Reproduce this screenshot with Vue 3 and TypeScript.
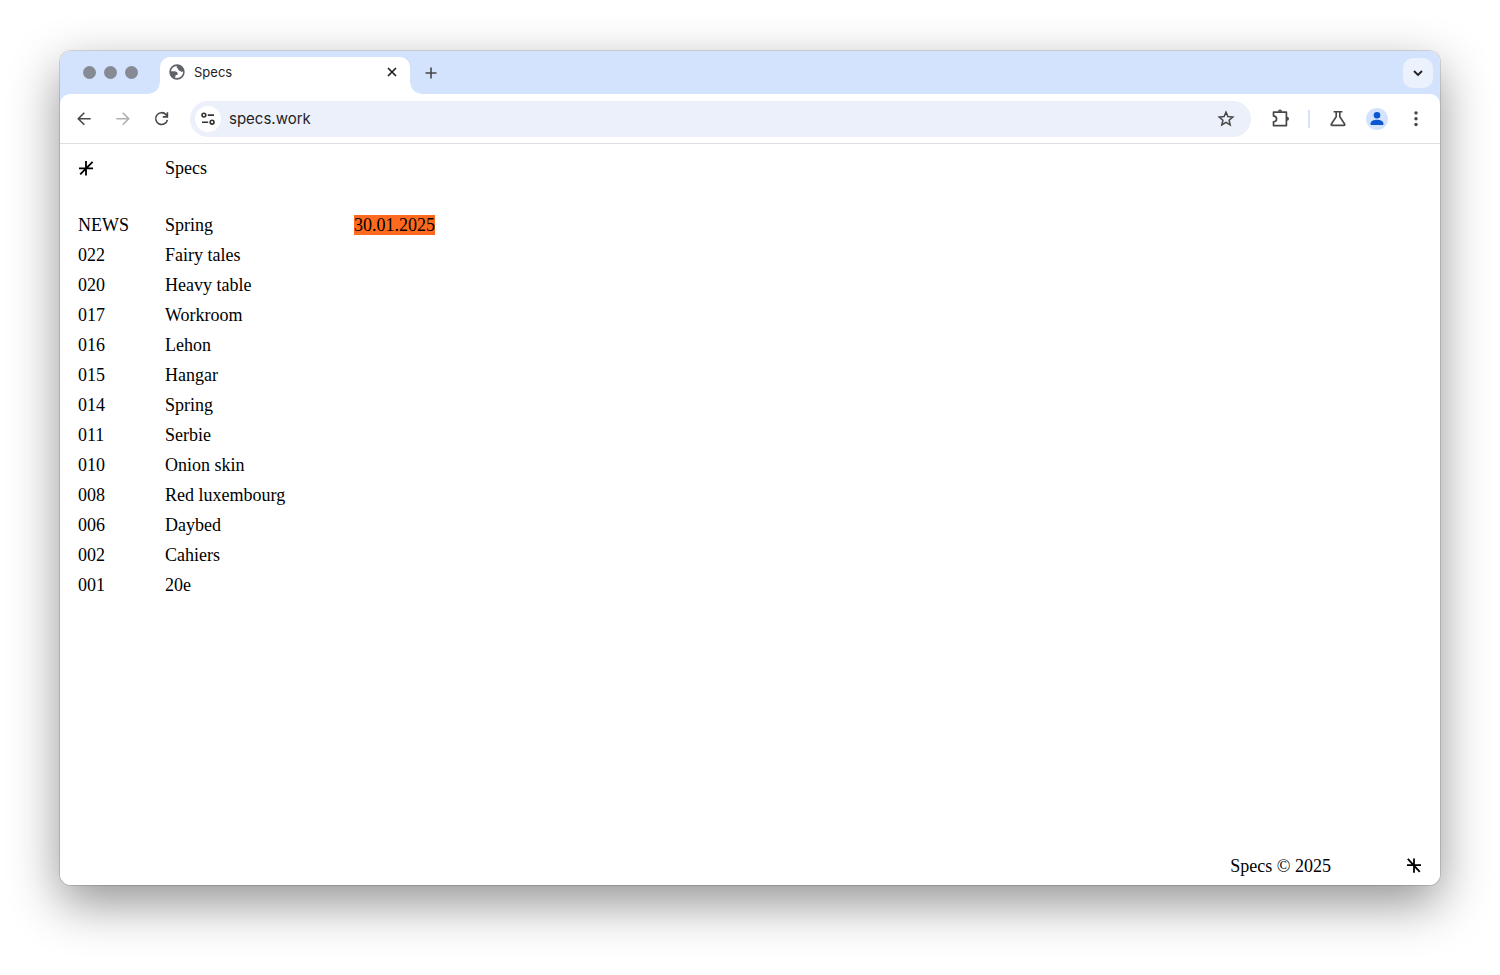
<script setup lang="ts">
import { ref } from 'vue'

interface Entry {
  code: string
  title: string
  date?: string
}

const address = ref('specs.work')

const entries: Entry[] = [
  { code: 'NEWS', title: 'Spring', date: '30.01.2025' },
  { code: '022', title: 'Fairy tales' },
  { code: '020', title: 'Heavy table' },
  { code: '017', title: 'Workroom' },
  { code: '016', title: 'Lehon' },
  { code: '015', title: 'Hangar' },
  { code: '014', title: 'Spring' },
  { code: '011', title: 'Serbie' },
  { code: '010', title: 'Onion skin' },
  { code: '008', title: 'Red luxembourg' },
  { code: '006', title: 'Daybed' },
  { code: '002', title: 'Cahiers' },
  { code: '001', title: '20e' },
]
</script>

<template>
  <div class="desktop">
    <div class="window">
      <div class="tabstrip">
        <div class="lights"><i></i><i></i><i></i></div>
        <div class="tab">
          <svg class="globe" viewBox="0 0 16 16" width="16" height="16" aria-hidden="true">
            <circle cx="8" cy="8" r="6.9" fill="#fff" stroke="#5f6368" stroke-width="1.6" />
            <path fill="#5f6368" d="M8.8 1C7.6 2 7.3 3.2 8 4C8.6 4.6 9.2 4.4 9.2 5.2C9.2 6.2 10 6.8 10.9 6.7C11.6 6.6 11.6 7.9 12.6 7.9C13.6 7.9 14 7.2 15 7.4C14.8 4 12.4 1.4 8.8 1ZM1.1 7.3H5.2C7.4 7.3 8.8 8.3 8.7 9.9C8.6 10.7 7.9 11 7 10.9C6.5 10.9 6.6 11.6 6.5 12.3C6.3 13 5.6 12.9 5.5 14.4C2.6 13.4 .9 10.7 1.1 7.3Z" />
          </svg>
          <span class="tab-title">Specs</span>
          <button class="icon close" aria-label="Close tab">
            <svg viewBox="0 0 16 16" width="16" height="16"><path d="M4 4l8 8M12 4l-8 8" stroke="#1f1f1f" stroke-width="1.7" fill="none" /></svg>
          </button>
        </div>
        <button class="icon new-tab" aria-label="New tab">
          <svg viewBox="0 0 16 16" width="16" height="16"><path d="M8 2.5v11M2.5 8h11" stroke="#474747" stroke-width="1.6" fill="none" /></svg>
        </button>
        <button class="icon tab-search" aria-label="Search tabs">
          <svg viewBox="0 0 16 16" width="16" height="16"><path d="M4 6l4 4 4-4" stroke="#1f1f1f" stroke-width="1.8" fill="none" /></svg>
        </button>
      </div>

      <div class="toolbar">
        <div class="nav">
          <button class="icon" aria-label="Back">
            <svg viewBox="0 0 20 20" width="20" height="20"><path d="M16.7 9.7H5M10.3 3.7L4.3 9.7l6 6" stroke="#474747" stroke-width="1.6" fill="none" /></svg>
          </button>
          <button class="icon" aria-label="Forward" disabled>
            <svg viewBox="0 0 20 20" width="20" height="20"><path d="M3.3 9.7H15M9.7 3.7l6 6-6 6" stroke="#b0b0b0" stroke-width="1.6" fill="none" /></svg>
          </button>
          <button class="icon" aria-label="Reload">
            <svg viewBox="0 0 20 20" width="20" height="20"><path d="M15.4 10.8A5.9 5.9 0 1 1 14 5.6L15.4 7.2M15.4 3.2V7.9H10.8" stroke="#474747" stroke-width="1.6" fill="none" /></svg>
          </button>
        </div>
        <div class="omnibox">
          <button class="icon site-info" aria-label="Site information">
            <svg viewBox="0 0 20 20" width="20" height="20" fill="none" stroke="#333" stroke-width="1.6">
              <circle cx="5.9" cy="6.1" r="1.9" /><path d="M9.8 6.1h6.2M4 13.2h6.2" /><circle cx="14.1" cy="13.2" r="1.9" />
            </svg>
          </button>
          <input v-model="address" class="address" type="text" aria-label="Address" spellcheck="false" />
          <button class="icon" aria-label="Bookmark this page">
            <svg viewBox="0 0 20 20" width="20" height="20"><path d="M10 3.1l1.9 4.5 4.9.4-3.7 3.2 1.1 4.8L10 13.4l-4.2 2.6 1.1-4.8L3.2 8l4.9-.4z" stroke="#474747" stroke-width="1.5" fill="none" /></svg>
          </button>
        </div>
        <div class="actions">
          <button class="icon" aria-label="Extensions">
            <svg viewBox="0 0 20 20" width="20" height="20">
              <path d="M3.5 3.2H16.4V16.6H3.5V12.9Q6.6 12.3 6.6 9.9T3.5 6.9Z" stroke="#474747" stroke-width="1.7" stroke-linejoin="round" fill="none" />
              <path d="M8 2.6a2 2 0 0 1 4 0zM17 7.8a2 2 0 0 1 0 4z" fill="#474747" />
            </svg>
          </button>
          <span class="divider"></span>
          <button class="icon" aria-label="Labs">
            <svg viewBox="0 0 20 20" width="20" height="20"><path d="M5.6 2.8h8.8M8.2 2.8V7.8L3.4 15Q2.7 16.4 4.2 16.4H15.8Q17.3 16.4 16.6 15L11.8 7.8V2.8" stroke="#474747" stroke-width="1.6" fill="none" /></svg>
          </button>
          <button class="icon profile" aria-label="Profile">
            <svg viewBox="0 0 22 22" width="22" height="22"><circle cx="11" cy="11" r="11" fill="#d3e3fd" /><circle cx="11" cy="7.3" r="3.3" fill="#0b57d0" /><path d="M4.6 17.1V15.4C4.6 13 7.8 11.8 11 11.8S17.4 13 17.4 15.4V17.1Z" fill="#0b57d0" /></svg>
          </button>
          <button class="icon" aria-label="Menu">
            <svg viewBox="0 0 20 20" width="20" height="20" fill="#474747"><circle cx="10" cy="3.9" r="1.7" /><circle cx="10" cy="9.7" r="1.7" /><circle cx="10" cy="15.5" r="1.7" /></svg>
          </button>
        </div>
      </div>

      <main class="page">
        <header class="masthead">
          <a href="#" class="mark" aria-label="Home">
            <svg viewBox="0 0 16 16" width="16" height="16"><path d="M1 8.4h14M8 1v14.4M14.6 1.9L2.2 14.4" stroke="#000" stroke-width="1.8" fill="none" /></svg>
          </a>
          <a href="#">Specs</a>
        </header>
        <table class="index">
          <tbody>
            <tr v-for="entry in entries" :key="entry.code">
              <td class="code">{{ entry.code }}</td>
              <td class="title"><a href="#">{{ entry.title }}</a></td>
              <td><mark v-if="entry.date">{{ entry.date }}</mark></td>
            </tr>
          </tbody>
        </table>
        <footer class="colophon">
          <span>Specs © 2025</span>
          <a href="#" class="mark" aria-label="Back to top">
            <svg viewBox="0 0 16 16" width="16" height="16"><path d="M1 7.2h14M8 .4v14.4M1.8 .9L13.8 13.8" stroke="#000" stroke-width="1.8" fill="none" /></svg>
          </a>
        </footer>
      </main>
    </div>
  </div>
</template>

<style>
body {
  margin: 0;
  background: #fff;
}
</style>

<style scoped>
.desktop {
  box-sizing: border-box;
  min-height: 100vh;
  padding: 51px 60px 90px;
  display: flex;
  overflow: hidden;
}
.window {
  flex: 1;
  min-width: 0;
  display: flex;
  flex-direction: column;
  border-radius: 11px;
  background: #fff;
  box-shadow: 0 0 0 1px rgba(0, 0, 0, 0.13), 0 18px 50px rgba(0, 0, 0, 0.43);
}
svg {
  display: block;
}
.icon {
  display: flex;
  align-items: center;
  justify-content: center;
  flex: none;
  padding: 0;
  border: 0;
  background: none;
}
.tabstrip {
  display: flex;
  align-items: center;
  height: 43px;
  padding: 0 7px 0 23px;
  border-radius: 11px 11px 0 0;
  background: #d3e3fd;
  box-shadow: 0 11px 0 #d3e3fd;
}
.lights {
  display: flex;
  gap: 8px;
  width: 77px;
}
.lights i {
  width: 13px;
  height: 13px;
  border-radius: 50%;
  background: #858a94;
}
.tab {
  position: relative;
  box-sizing: border-box;
  display: flex;
  align-items: center;
  align-self: flex-end;
  width: 250px;
  height: 37px;
  padding: 0 10px 8px 9px;
  border-radius: 10px 10px 0 0;
  background: #fff;
}
.tab::before,
.tab::after {
  content: '';
  position: absolute;
  bottom: 0;
  width: 11px;
  height: 11px;
}
.tab::before {
  right: 100%;
  background: radial-gradient(circle at 0 0, #d3e3fd 10px, #fff 11px);
}
.tab::after {
  left: 100%;
  background: radial-gradient(circle at 100% 0, #d3e3fd 10px, #fff 11px);
}
.tab-title {
  flex: 1;
  margin-left: 9px;
  font: 13px/16px Inter, 'Liberation Sans', sans-serif;
  color: #1f1f1f;
}
.new-tab {
  margin-left: 13px;
}
.tab-search {
  width: 30px;
  height: 30px;
  margin-left: auto;
  border-radius: 10px;
  background: #ecf2fd;
}
.toolbar {
  position: relative;
  display: flex;
  align-items: center;
  height: 49px;
  padding: 0 14px;
  border-radius: 10px 10px 0 0;
  border-bottom: 1px solid #dfdfe0;
  background: #fff;
}
.nav {
  display: flex;
  gap: 19px;
}
.omnibox {
  flex: 1;
  min-width: 0;
  display: flex;
  align-items: center;
  height: 36px;
  margin: 0 19px 0 18px;
  padding: 0 15px 0 5px;
  border-radius: 18px;
  background: #ebf0fa;
}
.site-info {
  width: 26px;
  height: 26px;
  border-radius: 50%;
  background: #fff;
}
.address {
  flex: 1;
  min-width: 0;
  padding: 0 0 0 8px;
  border: 0;
  outline: 0;
  background: none;
  font: 15px/20px Inter, 'Liberation Sans', sans-serif;
  color: #1f1f1f;
}
.actions {
  display: flex;
  align-items: center;
  gap: 18px;
}
.divider {
  width: 2px;
  height: 18px;
  background: #d3e3fd;
}
.page {
  flex: 1;
  display: flex;
  flex-direction: column;
  padding: 13px 18px 8px;
  border-radius: 0 0 11px 11px;
  background: #fff;
  font: 18px/22px 'Liberation Serif', 'Times New Roman', serif;
  color: #000;
}
.page a {
  color: inherit;
  text-decoration: none;
}
.masthead {
  display: grid;
  grid-template-columns: 87px 1fr;
  align-items: center;
  margin-bottom: 31px;
}
.index {
  align-self: flex-start;
  border-collapse: collapse;
}
.index td {
  height: 30px;
  padding: 0;
}
.index .code {
  width: 87px;
}
.index .title {
  width: 189px;
}
mark {
  background: #ff6a1f;
  color: inherit;
}
.colophon {
  display: flex;
  align-items: center;
  justify-content: flex-end;
  gap: 75px;
  margin-top: auto;
}
</style>
